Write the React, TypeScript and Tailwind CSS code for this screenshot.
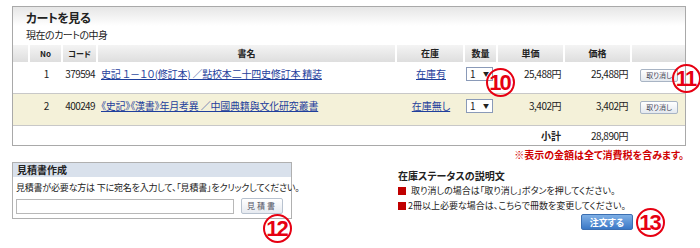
const font = "[font-family:'Noto_Sans_CJK_JP',sans-serif] [font-feature-settings:'palt']";

const Circle = ({ n, className }: { n: string; className: string }) => (
  <span
    className={`absolute flex h-[29px] w-[29px] items-center justify-center rounded-full border-2 border-[#e60012] text-[22px] font-bold leading-none tracking-[-2px] text-[#e60012] [font-family:'Liberation_Sans_Narrow','Liberation_Sans',sans-serif] ${className}`}
  >
    <span className="-ml-[2px]">{n}</span>
  </span>
);

const Qty = () => (
  <div className="flex h-[14px] w-[27px] items-center justify-between border border-[#8a9ab8] bg-white px-[3px] text-[10px] leading-none">
    <span>1</span>
    <span className="text-[6px]">▼</span>
  </div>
);

const CancelBtn = () => (
  <button className="h-[13px] w-[38px] rounded-[2px] border border-[#a8b4c4] bg-gradient-to-b from-white to-[#e4e9ef] text-[7px] leading-none text-[#445]">
    取り消し
  </button>
);

const cols = "grid grid-cols-[17px_33px_35px_299px_68px_33px_67px_67px_1fr]";

const rows = [
  { no: "1", code: "379594", title: "史記 １－１０(修訂本) ／點校本二十四史修訂本 精装", stock: "在庫有", price: "25,488円", bg: "bg-white" },
  { no: "2", code: "400249", title: "《史記》《漢書》年月考異 ／中國典籍與文化研究叢書", stock: "在庫無し", price: "3,402円", bg: "bg-[#f4f1d9]" },
];

export default function App() {
  return (
    <div className={`relative h-[248px] w-[700px] overflow-hidden bg-white text-[#222] ${font}`}>
      <div className="ml-[12px] mt-[6px] w-[674px] border border-[#a9a9a9]">
        <div className="bg-gradient-to-b from-[#e6e6e6] via-white to-white px-[13px] pt-[2px]">
          <div className="text-[12px] font-bold leading-[18px] tracking-[-0.5px]">カートを見る</div>
          <div className="pb-[3px] pt-[1px] text-[10px] leading-[14px] tracking-[-0.5px]">現在のカートの中身</div>
        </div>
        <div className={`${cols} h-[17px] text-[9px] font-bold leading-[17px]`}>
          {["", "No", "コード", "書名", "在庫", "数量", "単価", "価格", ""].map((h, i) => (
            <div key={i} className="border-r-2 border-white bg-gradient-to-b from-[#f4f4f4] to-[#dedede] text-center last:border-r-0">
              <span className={i === 1 || i === 2 ? "text-[8px]" : ""}>{h}</span>
            </div>
          ))}
        </div>
        {rows.map((r) => (
          <div key={r.no} className={`${cols} h-[32px] border-b border-[#c8c8c8] ${r.bg} pt-[5px] text-[10px] leading-[14px]`}>
            <div />
            <div className="text-center">{r.no}</div>
            <div className="pr-[3px] text-right tracking-[-0.6px]">{r.code}</div>
            <div className="pl-[3px] tracking-[-0.2px]">
              <a className="text-[#1f3f9c] underline">{r.title}</a>
            </div>
            <div className="text-center">
              <a className="text-[#1f3f9c] underline">{r.stock}</a>
            </div>
            <div className="pl-[1px]"><Qty /></div>
            <div className="pr-[4px] text-right tracking-[-0.5px]">{r.price}</div>
            <div className="pr-[4px] text-right tracking-[-0.5px]">{r.price}</div>
            <div className="pl-[8px]"><CancelBtn /></div>
          </div>
        ))}
        <div className={`${cols} h-[19px] text-[10px] leading-[19px]`}>
          <div className="col-span-6" />
          <div className="pr-[4px] text-right font-bold">小計</div>
          <div className="pr-[4px] text-right tracking-[-0.5px]">28,890円</div>
          <div />
        </div>
      </div>

      <div className="mr-[16px] mt-[3px] text-right text-[10px] font-bold leading-[12px] text-[#d00000]">
        ※表示の金額は全て消費税を含みます。
      </div>

      <div className="flex">
        <div className="ml-[12px] mt-[1px] h-[57px] w-[280px] border border-[#b0b0b0]">
          <div className="bg-[#d9e1ec] px-[4px] text-[10px] font-bold leading-[14px]">見積書作成</div>
          <div className="whitespace-nowrap px-[3px] pt-[4px] text-[9px] leading-[13px] tracking-[-0.2px]">
            見積書が必要な方は 下に宛名を入力して、「見積書」をクリックしてください。
          </div>
          <div className="mt-[4px] flex items-center px-[3px]">
            <input className="h-[15px] w-[218px] border border-[#b8b8b8] bg-white" />
            <button className="ml-[7px] h-[16px] w-[42px] rounded-[2px] border border-[#b8c2cf] bg-gradient-to-b from-white to-[#e6eaf0] text-[8px] leading-none tracking-[2px] text-[#556]">
              見積書
            </button>
          </div>
        </div>

        <div className="ml-[106px] mt-[7px] flex w-[235px] flex-col whitespace-nowrap text-[9px] leading-[15px]">
          <div className="text-[10px] font-bold">在庫ステータスの説明文</div>
          <div className="flex items-center">
            <span className="mr-[5px] h-[8px] w-[8px] bg-[#c00000]" />
            取り消しの場合は「取り消し」ボタンを押してください。
          </div>
          <div className="flex items-center">
            <span className="mr-[2px] h-[8px] w-[8px] bg-[#c00000]" />
            2冊以上必要な場合は、こちらで冊数を変更してください。
          </div>
          <div className="mt-[1px] flex justify-end">
            <button className="h-[16px] w-[52px] rounded-[2px] border border-[#3b6fb2] bg-gradient-to-b from-[#7fb0e6] to-[#3a78c6] text-[9px] font-bold leading-none text-white">
              注文する
            </button>
          </div>
        </div>
      </div>

      <Circle n="10" className="left-[486px] top-[68px]" />
      <Circle n="11" className="left-[672px] top-[64px]" />
      <Circle n="12" className="left-[263px] top-[214px]" />
      <Circle n="13" className="left-[636px] top-[208px]" />
    </div>
  );
}
